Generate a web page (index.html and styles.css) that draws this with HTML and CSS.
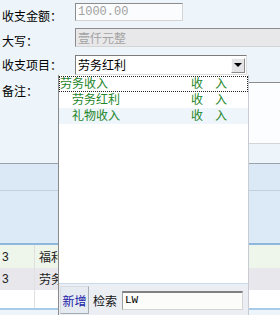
FILE: index.html
```html
<!DOCTYPE html>
<html lang="zh-CN">
<head>
  <meta charset="UTF-8" />
  <title>收支记录</title>
  <link rel="stylesheet" href="styles.css">
</head>
<body>
  <div class="form">
    <div class="row row-money">
      <label>收支金额：</label>
      <div class="field field-money">1000.00</div>
    </div>
    <div class="row row-upper">
      <label>大写：</label>
      <div class="field field-upper">壹仟元整</div>
    </div>
    <div class="row row-item">
      <label>收支项目：</label>
      <div class="select">
        <span class="select-text">劳务红利</span>
        <span class="select-btn"><i class="arrow"></i></span>
      </div>
    </div>
    <div class="row row-note">
      <label>备注：</label>
      <div class="field field-note"></div>
    </div>
  </div>

  <div class="grid">
    <div class="grid-head">
      <div class="grid-head-top"></div>
    </div>
    <div class="grid-body">
      <div class="grid-row tint-green"><span class="cell-no">3</span><span class="cell-name">福利</span></div>
      <div class="grid-row tint-gray"><span class="cell-no">3</span><span class="cell-name">劳务</span></div>
      <div class="grid-row"><span class="cell-no"></span><span class="cell-name"></span></div>
    </div>
  </div>

  <div class="dropdown">
    <div class="list">
      <div class="item focus"><span class="name">劳务收入</span><span class="kind">收　入</span></div>
      <div class="item sub"><span class="name">劳务红利</span><span class="kind">收　入</span></div>
      <div class="item sub alt"><span class="name">礼物收入</span><span class="kind">收　入</span></div>
    </div>
    <div class="footer">
      <button class="btn-add">新增</button>
      <span class="search-label">检索</span>
      <div class="search-box">LW</div>
    </div>
  </div>
</body>
</html>
```

FILE: styles.css
```css
body {
  margin: 0;
  width: 280px;
  height: 315px;
  overflow: hidden;
  position: relative;
  background: #eef5fa;
  font-family: "Noto Sans CJK SC", sans-serif;
  font-size: 12px;
  color: #000;
}

/* form */
.form {
  padding-top: 3px;
  height: 160px;
}
.row {
  display: flex;
  align-items: flex-start;
}
.row label {
  width: 73px;
  padding-left: 2px;
  line-height: 14px;
  flex: none;
}
.row-money { height: 18px; }
.row-money label { padding-top: 6px; }
.row-upper { height: 19px; margin-top: 7px; }
.row-upper label { padding-top: 6px; }
.row-item { height: 20px; margin-top: 8px; }
.row-item label { padding-top: 3px; }
.row-note { margin-top: 7px; }
.row-note label { padding-top: 2px; }

.field {
  box-sizing: border-box;
  border: 1px solid;
  border-color: #8c8c8c #d4d4d4 #d4d4d4 #8c8c8c;
  padding-left: 2px;
}
.field-money {
  width: 108px;
  height: 18px;
  background: #fbfcfd;
  color: #a0a0a0;
  font-family: "Liberation Mono", monospace;
  font-size: 12px;
  line-height: 16px;
}
.field-upper {
  flex: 1;
  height: 19px;
  border-right: none;
  background: #e8e8ea;
  color: #a3a3a3;
  line-height: 17px;
}
.field-note {
  flex: 1;
  height: 62px;
  border-right: none;
  background: #fcfdfe;
}

.select {
  box-sizing: border-box;
  width: 172px;
  height: 20px;
  border: 1px solid;
  border-color: #7c7c7c #dcdcdc #dcdcdc #7c7c7c;
  background: #fff;
  display: flex;
  align-items: center;
  justify-content: space-between;
  padding: 0 1px 0 2px;
}
.select-text { line-height: 16px; }
.select-btn {
  box-sizing: border-box;
  width: 14px;
  height: 15px;
  background: #e4e4e6;
  border: 1px solid;
  border-color: #fafafa #8a8a8a #8a8a8a #fafafa;
  display: flex;
  align-items: center;
  justify-content: center;
}
.arrow {
  width: 0;
  height: 0;
  border-left: 4px solid transparent;
  border-right: 4px solid transparent;
  border-top: 4px solid #000;
}

/* grid behind the dropdown */
.grid-head {
  border-top: 1px solid #9aa3ad;
  height: 79px;
  background: #dce9f6;
}
.grid-head-top {
  height: 26px;
  border-bottom: 1px solid #c2cfdc;
  background: #dbe8f5;
}
.grid-body {
  border-top: 2px solid #8db7dd;
  border-bottom: 2px solid #a9cbea;
  background: #fff;
}
.grid-row {
  display: flex;
  height: 22px;
  line-height: 22px;
}
.grid-row:first-child { height: 23px; line-height: 24px; }
.grid-row:last-child { height: 18px; }
.tint-green { background: #eef5ea; }
.tint-gray { background: #e8e7eb; }
.cell-no {
  width: 35px;
  padding-left: 2px;
  box-sizing: border-box;
  border-right: 1px solid #e0e0e0;
  font-family: "Liberation Sans", sans-serif;
  color: #222;
}
.cell-name {
  padding-left: 4px;
  color: #222;
}

/* dropdown overlay */
.dropdown {
  position: absolute;
  left: 58px;
  top: 75px;
  width: 191px;
  height: 240px;
  box-sizing: border-box;
  border-left: 1px solid #8a8a8a;
  border-right: 1px solid #c8ccd2;
  background: #ebeef3;
  display: flex;
  flex-direction: column;
}
.list {
  height: 207px;
  background: #fff;
  padding-top: 1px;
  border-bottom: 1px solid #c9dbeb;
}
.item {
  display: flex;
  height: 16px;
  line-height: 14px;
  padding-bottom: 2px;
  color: #23862a;
  box-sizing: border-box;
}
.item.focus {
  outline: 1px dotted #222;
  outline-offset: -1px;
}
.item .name { width: 131px; padding-left: 1px; }
.item.sub .name { width: 119px; padding-left: 13px; }
.item.alt { background: #eef5fb; }

.footer {
  display: flex;
  align-items: center;
  gap: 4px;
  padding: 2px 0 0 1px;
}
.btn-add {
  box-sizing: border-box;
  width: 29px;
  height: 28px;
  padding: 0;
  border: 1px solid;
  border-color: #d8dde4 #a8adb4 #a8adb4 #d8dde4;
  background: #e6eaf1;
  color: #1a1aa8;
  font-family: "Noto Sans CJK SC", sans-serif;
  font-size: 12px;
}
.search-label {
  color: #111;
  margin-right: 1px;
}
.search-box {
  box-sizing: border-box;
  width: 121px;
  height: 19px;
  border: 1px solid;
  border-top: 2px solid #808080;
  border-color: #808080 #d4d4d4 #d4d4d4 #a0a0a0;
  background: #fcfcfa;
  font-family: "Liberation Mono", monospace;
  font-size: 11px;
  line-height: 15px;
  padding-left: 2px;
}
```
